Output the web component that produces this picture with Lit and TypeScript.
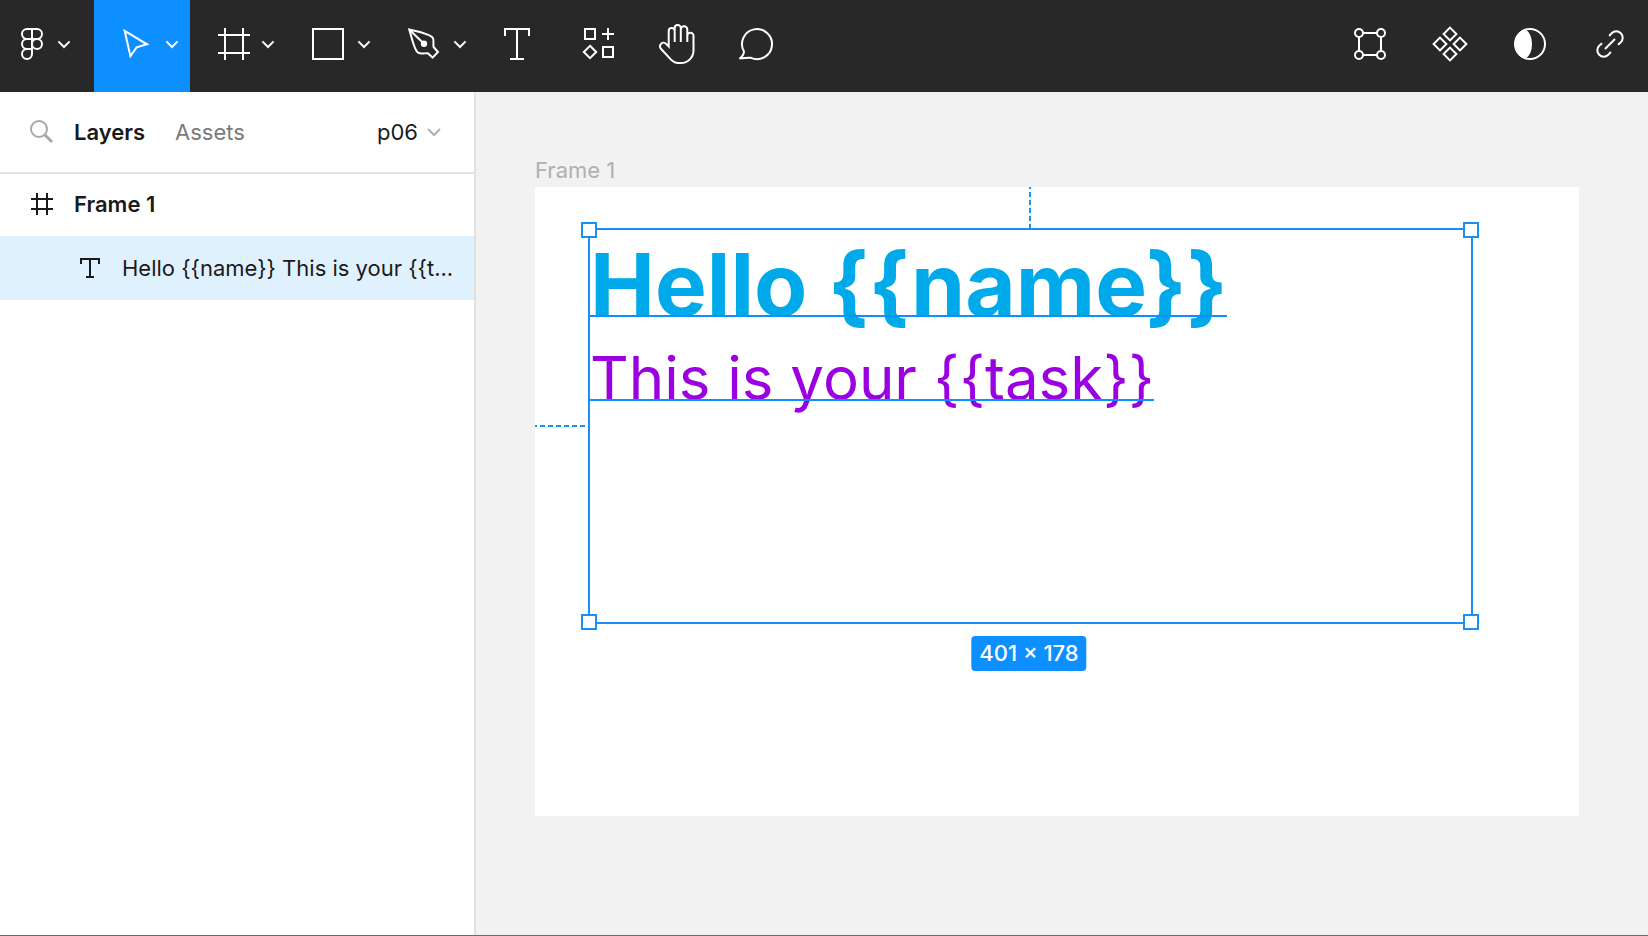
import { LitElement, html, css, svg } from "lit";
import { customElement, state } from "lit/decorators.js";
import { classMap } from "lit/directives/class-map.js";

type Tool = { id: string; label: string; menu?: boolean };

const drawTools: Tool[] = [
  { id: "move", label: "Move", menu: true },
  { id: "frame", label: "Frame", menu: true },
  { id: "rect", label: "Rectangle", menu: true },
  { id: "pen", label: "Pen", menu: true },
  { id: "text", label: "Text" },
  { id: "resources", label: "Resources" },
  { id: "hand", label: "Hand tool" },
  { id: "comment", label: "Comment" },
];

const editTools: Tool[] = [
  { id: "vector", label: "Edit object" },
  { id: "component", label: "Create component" },
  { id: "mask", label: "Use as mask" },
  { id: "link", label: "Create link" },
];

// Every glyph is drawn around the origin of a 40 by 40 box.
const glyphs: Record<string, unknown> = {
  logo: svg`<path d="M0-15h-5a5 5 0 0 0 0 10h5zM0-15h5a5 5 0 0 1 0 10h-5zM0-5h-5a5 5 0 0 0 0 10h5zM0 5h-5a5 5 0 1 0 5 5z"/><circle cx="5" cy="0" r="5"/>`,
  move: svg`<path d="M-11.3-13.2L11 0.3L0.6 3.4L-5.6 12.2z"/>`,
  frame: svg`<path d="M-7-16v32M11-16v32M-14-9h32M-14 9h32"/>`,
  rect: svg`<path d="M-15-15h30v30h-30z"/>`,
  pen: svg`<path d="M-14.8-14.5C-4-12 5-10.5 8.6-6.5C10.6-4 8.8-0.5 9.6 3L14 8L8.6 13.6L3.8 9.2C1 8.8-3 11-6.5 8.2C-10 5-11.5-4-14.8-14.5zL0-0.3"/><circle class="solid" cx="0" cy="-0.3" r="2.2"/>`,
  text: svg`<path d="M-13-8v-7h24v7M-1-15v30M-8 15h14"/>`,
  resources: svg`<path d="M-13-15h10v10h-10zM5 3h10v10h-10zM10-16v12M4-10h12M-8 1.8l6.2 6.2l-6.2 6.2l-6.2-6.2z"/>`,
  hand: svg`<path d="M-3.3-2V-13a3 3 0 0 0-6 0V2.6l-2.6-2.7a3.5 3.5 0 0 0-5.2 4.8L-7 15.6Q-3.7 19-0.2 19h3.2a12.5 12.5 0 0 0 12.5-12.5V-8.2a3.1 3.1 0 0 0-6.2 0M-3.3-13v-3a3 3 0 0 1 6.1 0V-2M2.8-14.4a3.2 3.2 0 0 1 6.5 0V-2"/>`,
  comment: svg`<path d="M-14 7.5A15 15 0 1 1-7 13.8Q-11 13.6-18.5 14.6Q-14.2 11.5-14 7.5z"/>`,
  vector: svg`<circle cx="-11" cy="-11" r="4"/><circle cx="11" cy="-11" r="4"/><circle cx="-11" cy="11" r="4"/><circle cx="11" cy="11" r="4"/><path d="M-7-11h14M-7 11h14M-11-7v14M11-7v14"/>`,
  component: svg`<path d="M0-16.4l6.4 6.4l-6.4 6.4l-6.4-6.4zM0 3.6l6.4 6.4l-6.4 6.4l-6.4-6.4zM-10-6.4l6.4 6.4l-6.4 6.4l-6.4-6.4zM10-6.4l6.4 6.4l-6.4 6.4l-6.4-6.4z"/>`,
  mask: svg`<circle r="15"/><path class="solid" d="M-5-14A15 15 0 0 0-5 14C3 8 3-8-5-14z"/>`,
  link: svg`<path d="M-5 5L5-5M-0.8-8l2.5-2.8a6.4 6.4 0 0 1 9.1 9.1l-2.8 2.5M0.8 8l-2.5 2.8a6.4 6.4 0 0 1-9.1-9.1l2.8-2.5"/>`,
};

const icon = (id: string) =>
  html`<svg class="icon" viewBox="-20 -20 40 40" aria-hidden="true">${glyphs[id]}</svg>`;

const chevron = html`<svg class="chevron" viewBox="-8 -8 16 16" aria-hidden="true">
  <path d="M-5.6-2.6L0 3L5.6-2.6" />
</svg>`;

@customElement("tool-bar")
export class ToolBar extends LitElement {
  static styles = css`
    :host {
      display: flex;
      justify-content: space-between;
      height: 92px;
      background: #282828;
    }
    .group {
      display: flex;
    }
    button {
      display: flex;
      align-items: center;
      gap: 8px;
      margin: 0;
      border: 0;
      padding: 0 20px 4px;
      background: none;
      color: #fff;
    }
    .home {
      gap: 4px;
      padding: 0 22px 4px 12px;
    }
    .menu {
      padding: 0 10px 4px 22px;
    }
    .active {
      background: #0d8fff;
    }
    .edit button:last-child {
      padding-right: 18px;
    }
    svg {
      flex: none;
      fill: none;
      stroke: currentColor;
      stroke-width: 2;
      overflow: visible;
    }
    .icon {
      width: 40px;
      height: 40px;
    }
    .chevron {
      width: 16px;
      height: 16px;
    }
    .solid {
      fill: currentColor;
    }
  `;

  @state() private current = "move";

  private button(tool: Tool) {
    return html`<button
      class=${classMap({ menu: !!tool.menu, active: this.current === tool.id })}
      aria-label=${tool.label}
      @click=${() => (this.current = tool.id)}
    >
      ${icon(tool.id)}${tool.menu ? chevron : null}
    </button>`;
  }

  render() {
    return html`
      <div class="group">
        <button class="home" aria-label="Main menu">${icon("logo")}${chevron}</button>
        ${drawTools.map((t) => this.button(t))}
      </div>
      <div class="group edit">${editTools.map((t) => this.button(t))}</div>
    `;
  }
}

@customElement("layers-panel")
export class LayersPanel extends LitElement {
  static styles = css`
    :host {
      display: block;
      box-sizing: border-box;
      width: 476px;
      border-right: 2px solid #e1e1e1;
      background: #fff;
      color: #1a1a1a;
      font: 400 22px/32px Inter, sans-serif;
    }
    button {
      margin: 0;
      border: 0;
      padding: 0;
      background: none;
      color: inherit;
      font: inherit;
      text-align: left;
    }
    svg {
      flex: none;
      fill: none;
      stroke: currentColor;
      stroke-width: 2;
    }
    .head {
      display: flex;
      align-items: center;
      height: 80px;
      padding: 0 32px 0 30px;
      border-bottom: 2px solid #e1e1e1;
    }
    .search {
      display: flex;
      margin-right: 20px;
      color: #a8a8a8;
    }
    .tab {
      margin-right: 30px;
      color: #7a7a7a;
    }
    .selected {
      color: #1a1a1a;
      font-weight: 600;
    }
    .page {
      display: flex;
      align-items: center;
      gap: 8px;
      margin-left: auto;
    }
    .chevron {
      color: #b0b0b0;
    }
    .row {
      display: flex;
      align-items: center;
      width: 100%;
      height: 62px;
      gap: 20px;
      padding: 0 16px 0 30px;
    }
    .row.top {
      padding-bottom: 2px;
      font-weight: 600;
    }
    .row.child {
      height: 64px;
      padding-left: 78px;
      background: #e0f1fe;
    }
    .name {
      min-width: 0;
      overflow: hidden;
      text-overflow: ellipsis;
      white-space: nowrap;
    }
  `;

  render() {
    return html`
      <div class="head">
        <button class="search" aria-label="Search">
          <svg width="24" height="24" viewBox="0 0 24 24">
            <circle cx="9" cy="9" r="8" />
            <path d="M14.5 14.5L22 22" stroke-width="3" />
          </svg>
        </button>
        <button class="tab selected">Layers</button>
        <button class="tab">Assets</button>
        <button class="page">
          p06
          <svg class="chevron" width="16" height="16" viewBox="-8 -8 16 16">
            <path d="M-6-3L0 3L6-3" />
          </svg>
        </button>
      </div>
      <button class="row top">
        <svg width="24" height="24" viewBox="0 0 24 24">
          <path d="M7 1v22M17 1v22M1 7h22M1 17h22" />
        </svg>
        <span class="name">Frame 1</span>
      </button>
      <button class="row child">
        <svg width="24" height="24" viewBox="0 0 24 24">
          <path d="M3 8V3h18v5M12 3v18M8 21h8" />
        </svg>
        <span class="name">Hello {{name}} This is your {{t...</span>
      </button>
    `;
  }
}

@customElement("design-canvas")
export class DesignCanvas extends LitElement {
  static styles = css`
    :host {
      display: block;
      flex: 1;
      min-width: 0;
      padding: 63px 69px 0 59px;
      background: #f2f2f2;
      font: 400 22px/30px Inter, sans-serif;
    }
    .label {
      margin-bottom: 2px;
      color: #b0b0b0;
    }
    .artboard {
      position: relative;
      aspect-ratio: 1044 / 629;
      background: #fff;
    }
    .text-box {
      position: absolute;
      box-sizing: border-box;
      left: 53px;
      top: 41px;
      width: 885px;
      height: 396px;
      border: 2px solid #1a8ff5;
    }
    .line {
      position: relative;
      width: max-content;
      margin: 0;
      white-space: nowrap;
    }
    .line::after {
      content: "";
      position: absolute;
      left: 0;
      right: 0;
      height: 2px;
      background: #0d8fff;
    }
    .title {
      color: #00a9e9;
      font-weight: 700;
      font-size: 87px;
      line-height: 110px;
    }
    .title::after {
      top: 85px;
    }
    .body {
      color: #9a00e0;
      font-weight: 400;
      font-size: 60px;
      line-height: 76px;
    }
    .body::after {
      top: 59px;
    }
    .handle {
      position: absolute;
      box-sizing: border-box;
      width: 16px;
      height: 16px;
      border: 2px solid #1a8ff5;
      background: #fff;
    }
    .n {
      top: -8px;
    }
    .s {
      bottom: -8px;
    }
    .w {
      left: -9px;
    }
    .e {
      right: -8px;
    }
    .guide {
      position: absolute;
      stroke: #1a8ff5;
      stroke-width: 2;
      stroke-dasharray: 5 3;
      stroke-dashoffset: 3;
    }
    .guide.up {
      left: 439px;
      bottom: 100%;
    }
    .guide.side {
      right: 100%;
      top: 195px;
    }
    .size {
      position: absolute;
      left: 439px;
      top: 406px;
      transform: translateX(-50%);
      padding: 0 8px;
      border-radius: 4px;
      background: #0d8fff;
      color: #fff;
      font-weight: 500;
      line-height: 35px;
      white-space: nowrap;
    }
  `;

  render() {
    return html`
      <div class="label">Frame 1</div>
      <div class="artboard">
        <div class="text-box">
          <p class="line title">Hello {{name}}</p>
          <p class="line body">This is your {{task}}</p>
          <svg class="guide up" width="2" height="43"><path d="M1 0v43" /></svg>
          <svg class="guide side" width="55" height="2"><path d="M0 1h55" /></svg>
          <i class="handle n w"></i><i class="handle n e"></i>
          <i class="handle s w"></i><i class="handle s e"></i>
          <span class="size">401 × 178</span>
        </div>
      </div>
    `;
  }
}

@customElement("app-root")
export class AppRoot extends LitElement {
  static styles = css`
    :host {
      display: flex;
      flex-direction: column;
      box-sizing: border-box;
      min-height: 100vh;
      border-bottom: 1px solid #6b6b6b;
    }
    .work {
      display: flex;
      flex: 1;
    }
    layers-panel {
      flex: none;
    }
  `;

  render() {
    return html`
      <tool-bar></tool-bar>
      <div class="work">
        <layers-panel></layers-panel>
        <design-canvas></design-canvas>
      </div>
    `;
  }
}
